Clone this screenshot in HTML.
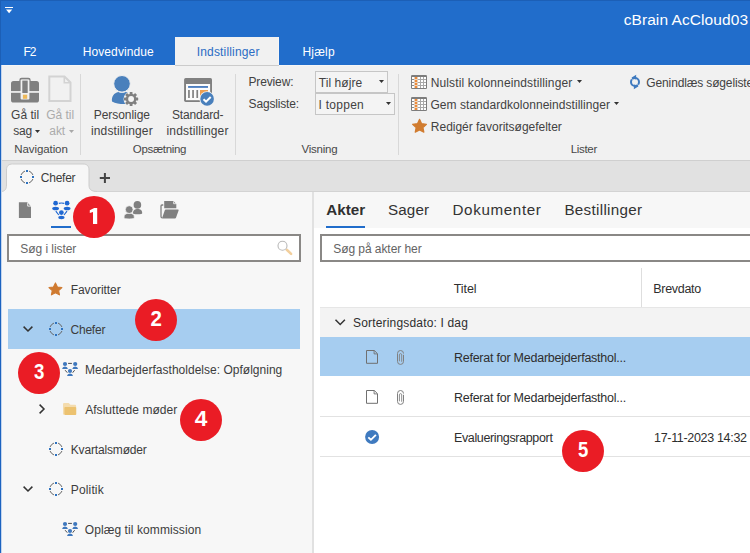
<!DOCTYPE html>
<html>
<head>
<meta charset="utf-8">
<style>
*{box-sizing:border-box;margin:0;padding:0}
html,body{width:750px;height:553px;overflow:hidden}
body{position:relative;background:#f1f1f1;font-family:"Liberation Sans",sans-serif;font-size:12px;color:#262626}
.a{position:absolute;white-space:nowrap}
.t{position:absolute;white-space:nowrap;line-height:16px;height:16px}
.sep{width:1px;background:#d8d8d8;top:74px;height:81px}
.num{position:absolute;width:42px;height:42px;border-radius:50%;background:#ea1c25;color:#fff;font-weight:bold;font-size:22px;line-height:40.500px;text-align:center}
</style>
</head>
<body>
<!-- title bar -->
<div class="a" style="left:0;top:0;width:750px;height:65px;background:#216dcb"></div>
<div class="a" style="left:0;top:0;width:750px;height:1px;background:#1c5fb6"></div>
<div class="a" style="left:0;top:65px;width:750px;height:1px;background:#f6f6f6"></div>
<svg class="a" style="left:0;top:0" width="20" height="16" viewBox="0 0 20 16"><rect x="5" y="7" width="8" height="1" fill="#fff"/><path d="M6 9.500h6.200L9.100 13.200z" fill="#fff"/></svg>
<div class="a" style="left:0;top:0;width:1px;height:65px;background:#1c5fb6"></div>
<div class="a" style="left:175px;top:37px;width:104px;height:28px;background:#f1f1f1"></div>
<div class="a" style="left:278px;top:37px;width:1px;height:28px;background:#f6f6f6"></div>

<!-- ribbon -->
<div class="a" style="left:0;top:66px;width:750px;height:94px;background:#f1f1f1"></div>
<div class="a" style="left:175px;top:65px;width:104px;height:1px;background:#cbcbcb"></div>
<div class="a" style="left:0;top:160px;width:750px;height:1px;background:#cfcfcf"></div>
<div class="a sep" style="left:80px"></div>
<div class="a sep" style="left:235px"></div>
<div class="a sep" style="left:398px"></div>
<div class="a" style="left:315px;top:71px;width:73px;height:22px;border:1px solid #c6c6c6;background:#f4f4f4"></div>
<div class="a" style="left:315px;top:93px;width:80px;height:22px;border:1px solid #c6c6c6;background:#f4f4f4"></div>
<!-- ribbon icons -->
<svg class="a" style="left:10px;top:76px" width="30" height="28" viewBox="0 0 30 28">
<path d="M10.3 6V4a1.3 1.3 0 0 1 1.3-1.3h6.8a1.3 1.3 0 0 1 1.3 1.3v2" fill="none" stroke="#808080" stroke-width="1.9"/>
<rect x="1" y="5" width="28" height="21.5" rx="2.6" fill="#808080"/>
<rect x="1" y="15.1" width="28" height="1.7" fill="#f1f1f1"/>
<rect x="10.6" y="3.6" width="8.8" height="19.8" rx="1" fill="#f1f1f1"/>
<rect x="12.3" y="4.6" width="5.4" height="12.4" fill="#808080"/>
<rect x="12.9" y="18.7" width="4.3" height="4.1" fill="#eeb95a"/>
</svg>
<svg class="a" style="left:47px;top:74px" width="26" height="30" viewBox="0 0 26 30">
<path d="M2.3 2.5H17.5L23.5 8.5V27H2.3Z" fill="#f1f1f1" stroke="#d3d3d3" stroke-width="2"/>
<path d="M17.3 2.8V8.8H23.3" fill="none" stroke="#d3d3d3" stroke-width="1.6"/>
</svg>
<svg class="a" style="left:108px;top:72px" width="36" height="36" viewBox="0 0 36 36">
<circle cx="14" cy="11.8" r="7.9" fill="#4a80bc"/>
<path d="M4 29.5c-0.6-5 2-8.700 6.300-9.600c2.400 1.200 5 1.200 7.400 0c1.500 0.300 2.600 0.800 3.600 1.600v10.100c-5 1-12.500 0.600-17.300-2.100z" fill="#4a80bc"/>
<circle cx="14" cy="11.800" r="8.300" fill="#4a80bc" stroke="#f1f1f1" stroke-width="1"/>
<circle cx="23.100" cy="27" r="7.600" fill="#f1f1f1"/>
<g fill="#808080"><circle cx="23.100" cy="27" r="5.300"/>
<g id="gt"><rect x="21.700" y="19.900" width="2.800" height="14.200" rx=".4"/></g>
<g transform="rotate(45 23.100 27)"><g><rect x="21.700" y="19.900" width="2.800" height="14.200" rx=".4"/></g></g><g transform="rotate(90 23.100 27)"><g><rect x="21.700" y="19.900" width="2.800" height="14.200" rx=".4"/></g></g><g transform="rotate(135 23.100 27)"><g><rect x="21.700" y="19.900" width="2.800" height="14.200" rx=".4"/></g></g></g>
<circle cx="23.100" cy="27" r="2.900" fill="#f4f4f4"/>
</svg>
<svg class="a" style="left:180px;top:72px" width="38" height="38" viewBox="0 0 38 38">
<rect x="4.100" y="6" width="27.900" height="23.900" rx="1.600" fill="#808080"/>
<rect x="6" y="12" width="24.100" height="16.200" fill="#fbfbfb"/>
<rect x="8.100" y="14.100" width="19.900" height="1.700" fill="#3a70b8"/>
<rect x="8.100" y="18" width="1.700" height="8" fill="#808080"/>
<rect x="12.200" y="18" width="1.700" height="8" fill="#808080"/>
<rect x="16.400" y="18" width="1.700" height="8" fill="#808080"/>
<rect x="20" y="18" width="8" height="6" fill="#f0a050"/>
<circle cx="27.100" cy="26.900" r="7.700" fill="#f1f1f1"/>
<circle cx="27.100" cy="26.900" r="6.800" fill="#4a80bc"/>
<path d="M23.500 27.300l2.500 2.300l4.700-4.600" fill="none" stroke="#fff" stroke-width="2"/>
</svg>
<svg class="a" style="left:411px;top:75px" width="16" height="14" viewBox="0 0 16 14"><g><rect x="0" y="0" width="16" height="14" rx="1.300" fill="#7d7d7d"/><rect x="1" y="2" width="14" height="11" fill="#a8a8a8"/><rect x="1" y="2" width="2" height="11" fill="#8c8c8c"/><rect x="3.200" y="2" width="3.600" height="11" fill="#f1d7bf"/><g fill="#fff"><rect x="1" y="2" width="2" height="2"/><rect x="7" y="2" width="2" height="2"/><rect x="10" y="2" width="2" height="2"/><rect x="13" y="2" width="2" height="2"/><rect x="1" y="5" width="2" height="2"/><rect x="7" y="5" width="2" height="2"/><rect x="10" y="5" width="2" height="2"/><rect x="13" y="5" width="2" height="2"/><rect x="1" y="8" width="2" height="2"/><rect x="7" y="8" width="2" height="2"/><rect x="10" y="8" width="2" height="2"/><rect x="13" y="8" width="2" height="2"/><rect x="1" y="11" width="2" height="2"/><rect x="7" y="11" width="2" height="2"/><rect x="10" y="11" width="2" height="2"/><rect x="13" y="11" width="2" height="2"/></g><g fill="#ef8a38"><rect x="4" y="2" width="2" height="2"/><rect x="4" y="5" width="2" height="2"/><rect x="4" y="8" width="2" height="2"/><rect x="4" y="11" width="2" height="2"/></g></g></svg>
<svg class="a" style="left:411px;top:97px" width="16" height="14" viewBox="0 0 16 14">
<g id="tbl"><rect x="0" y="0" width="16" height="14" rx="1.300" fill="#7d7d7d"/><rect x="1" y="2" width="14" height="11" fill="#a8a8a8"/><rect x="1" y="2" width="2" height="11" fill="#8c8c8c"/><rect x="3.200" y="2" width="3.600" height="11" fill="#f1d7bf"/><g fill="#fff"><rect x="1" y="2" width="2" height="2"/><rect x="7" y="2" width="2" height="2"/><rect x="10" y="2" width="2" height="2"/><rect x="13" y="2" width="2" height="2"/><rect x="1" y="5" width="2" height="2"/><rect x="7" y="5" width="2" height="2"/><rect x="10" y="5" width="2" height="2"/><rect x="13" y="5" width="2" height="2"/><rect x="1" y="8" width="2" height="2"/><rect x="7" y="8" width="2" height="2"/><rect x="10" y="8" width="2" height="2"/><rect x="13" y="8" width="2" height="2"/><rect x="1" y="11" width="2" height="2"/><rect x="7" y="11" width="2" height="2"/><rect x="10" y="11" width="2" height="2"/><rect x="13" y="11" width="2" height="2"/></g><g fill="#ef8a38"><rect x="4" y="2" width="2" height="2"/><rect x="4" y="5" width="2" height="2"/><rect x="4" y="8" width="2" height="2"/><rect x="4" y="11" width="2" height="2"/></g></g>
</svg>
<svg class="a" style="left:411px;top:118px" width="17" height="15" viewBox="0 0 17 15"><path id="star" transform="translate(.9 .9) scale(.9 .88)" d="M8.500 .5l2.350 4.900l5.350 .700l-3.900 3.700l1 5.300l-4.800-2.600l-4.800 2.600l1-5.300l-3.900-3.700l5.350-.700z" fill="#d17c30" stroke="#d17c30" stroke-width="1.300" stroke-linejoin="round"/></svg>
<svg class="a" style="left:628px;top:73px" width="14" height="18" viewBox="-7 -9 14 18">
<circle cx="0" cy="0" r="4" fill="none" stroke="#3f7abf" stroke-width="2"/>
<path d="M-3.700 -4.300L1.200 -7.200L1 -2.600ZM3.700 4.300L-1.200 7.200L-1 2.600Z" fill="#3f7abf"/>
<path d="M-4.600 -5.200L-2.600 -2.200M4.600 5.200L2.600 2.200" stroke="#f1f1f1" stroke-width=".7"/>
</svg>
<!-- dropdown arrows -->
<svg class="a" style="left:35px;top:130px" width="5" height="3" viewBox="0 0 5 3"><path d="M0 0h5L2.500 3z" fill="#333"/></svg>
<svg class="a" style="left:69px;top:130px" width="5" height="3" viewBox="0 0 5 3"><path d="M0 0h5L2.500 3z" fill="#a8a8a8"/></svg>
<svg class="a" style="left:379px;top:80px" width="5" height="3" viewBox="0 0 5 3"><path d="M0 0h5L2.500 3z" fill="#333"/></svg>
<svg class="a" style="left:386px;top:102px" width="5" height="3" viewBox="0 0 5 3"><path d="M0 0h5L2.500 3z" fill="#333"/></svg>
<svg class="a" style="left:577px;top:80px" width="5" height="3" viewBox="0 0 5 3"><path d="M0 0h5L2.500 3z" fill="#333"/></svg>
<svg class="a" style="left:614px;top:102px" width="5" height="3" viewBox="0 0 5 3"><path d="M0 0h5L2.500 3z" fill="#333"/></svg>


<!-- tab strip -->
<div class="a" style="left:0;top:161px;width:750px;height:30px;background:#e1e1e1"></div>
<div class="a" style="left:0;top:191px;width:750px;height:1px;background:#d3d3d3"></div>

<!-- content -->
<div class="a" style="left:0;top:192px;width:750px;height:361px;background:#f7f7f7"></div>
<div class="a" style="left:312px;top:192px;width:2px;height:361px;background:#e1e1e1"></div>
<div class="a" style="left:314px;top:228px;width:436px;height:325px;background:#fff"></div>
<svg class="a" style="left:0;top:160px" width="112" height="33" viewBox="0 0 112 33">
<path d="M1 31.500C5 31.500 6.500 29 6.500 25V10C6.500 6 8.500 4 12.500 4H83C87 4 89 6 89 10V25C89 29 90.500 31.500 97.500 31.500V33H1Z" fill="#f7f7f7"/>
<path d="M1 31.500C5 31.500 6.500 29 6.500 25V10C6.500 6 8.500 4 12.500 4H83C87 4 89 6 89 10V25C89 29 90.500 31.500 97.500 31.500" fill="none" stroke="#cdcdcd" stroke-width="1"/>
<path d="M99.800 18h10.200M104.900 12.900v10.200" stroke="#444" stroke-width="2"/>
</svg>
<div class="a" style="left:0;top:65px;width:1px;height:488px;background:#1c63c0"></div>
<div class="a" style="left:1px;top:65px;width:1px;height:488px;background:#c3d5ee"></div>

<!-- left panel -->
<div class="a" style="left:51px;top:226px;width:20px;height:2px;background:#216dcb"></div>
<div class="a" style="left:7px;top:234px;width:294px;height:28px;background:#fff;border:2px solid #8a8886"></div>
<div class="a" style="left:8px;top:309px;width:292px;height:40px;background:#a6cdf0"></div>

<!-- right panel -->
<div class="a" style="left:326px;top:226px;width:39px;height:2px;background:#216dcb"></div>
<div class="a" style="left:320px;top:234px;width:440px;height:28px;background:#fff;border:2px solid #8a8886"></div>
<div class="a" style="left:641px;top:268px;width:1px;height:39px;background:#dedede"></div>
<div class="a" style="left:320px;top:307px;width:430px;height:30px;background:#f3f3f3;border-top:1px solid #e6e6e6"></div>
<div class="a" style="left:320px;top:337px;width:430px;height:39px;background:#a6cdf0"></div>
<div class="a" style="left:320px;top:416px;width:430px;height:1px;background:#e2e2e2"></div>
<div class="a" style="left:320px;top:456px;width:430px;height:1px;background:#e2e2e2"></div>
<!--ICONS2S--><!-- panel icons -->
<svg class="a" style="left:0;top:160px" width="750" height="393" viewBox="0 160 750 393">
<defs>
<g id="circ"><path d="M2.400 -5.800A6.280 6.280 0 0 1 5.800 -2.400M5.800 2.400A6.280 6.280 0 0 1 2.400 5.800M-2.400 5.800A6.280 6.280 0 0 1 -5.800 2.400M-5.800 -2.400A6.280 6.280 0 0 1 -2.400 -5.800" fill="none" stroke="#666" stroke-width="1" stroke-linecap="round"/><g fill="#2e72bf"><rect x="-1" y="-7" width="2" height="2"/><rect x="-1" y="5" width="2" height="2"/><rect x="-7" y="-1" width="2" height="2"/><rect x="5" y="-1" width="2" height="2"/></g></g>
<g id="ppl"><g stroke="#4a4a4a" stroke-width="1" fill="none"><path d="M-1.900 -4.600h3.800M-4.900 2.200l2.200 2.500M4.600 2.200l-1.900 2.500"/></g>
<g fill="#3f78bd"><circle cx="-5" cy="-4" r="2.100"/><circle cx="5.200" cy="-4" r="2.100"/><circle cx="0" cy="3" r="2.100"/>
<path d="M-7.900 1.100q.3-2.500 2.900-2.500t2.900 2.500zM2.300 1.100q.3-2.500 2.900-2.500t2.900 2.500zM-3 7.900q.3-2.500 3-2.500t3 2.500z"/></g></g>
<g id="doc"><path d="M.5 .5H8.300L11.500 3.700V13.300H.5Z" fill="none" stroke="#707070" stroke-width="1"/><path d="M8.100 .7V3.900H11.300" fill="none" stroke="#707070" stroke-width=".9"/></g>
<g id="clip"><path d="M6.500 4.800V11.400a3 3 0 0 1-6 0V3.500a3 3 0 0 1 6 0" fill="none" stroke="#808080" stroke-width="1"/><path d="M2.400 11.300V4.800a1.150 1.150 0 0 1 2.300 0V11.800" fill="none" stroke="#808080" stroke-width=".9"/></g>
</defs>
<!-- tab circle -->
<g transform="translate(27 177)"><g><path d="M2.400 -5.800A6.280 6.280 0 0 1 5.800 -2.400M5.800 2.400A6.280 6.280 0 0 1 2.400 5.800M-2.400 5.800A6.280 6.280 0 0 1 -5.800 2.400M-5.800 -2.400A6.280 6.280 0 0 1 -2.400 -5.800" fill="none" stroke="#666" stroke-width="1" stroke-linecap="round"/><g fill="#2e72bf"><rect x="-1" y="-7" width="2" height="2"/><rect x="-1" y="5" width="2" height="2"/><rect x="-7" y="-1" width="2" height="2"/><rect x="5" y="-1" width="2" height="2"/></g></g></g>
<!-- toolbar: doc -->
<path d="M18.900 202.300H27.300L31 206.500V217.900H18.900Z" fill="#808080"/>
<path d="M27.700 202.700V206.100H30.900" fill="none" stroke="#f7f7f7" stroke-width=".9"/>
<!-- toolbar: network -->
<g fill="#1f68d2"><circle cx="55.600" cy="203.200" r="2.350"/><circle cx="67.100" cy="203.200" r="2.350"/><circle cx="61.400" cy="212.600" r="2.350"/>
<ellipse cx="55.600" cy="208.400" rx="3.400" ry="1.750"/><ellipse cx="67.100" cy="208.400" rx="3.400" ry="1.750"/><ellipse cx="61.400" cy="217.500" rx="3.100" ry="1.650"/></g>
<g fill="none" stroke="#1f68d2" stroke-width="1.200"><path d="M58.800 203.400Q61.400 202.600 64 203.400M55.800 211.200L58.800 215M67 211.200L64 215"/></g>
<!-- toolbar: people -->
<g fill="#808080"><circle cx="137.400" cy="204.900" r="3.800"/><path d="M133 213.200C133 210 134.800 208.900 137.600 208.900S142.200 210 142.200 213.200Q142.200 214.300 137.600 214.300T133 213.200Z"/></g>
<g fill="#808080" stroke="#f7f7f7" stroke-width=".8"><path d="M123.900 217.700C123.900 214.300 125.800 213.200 129.200 213.200S134.400 214.300 134.400 217.700Q134.400 219 129.200 219T123.900 217.700Z"/><circle cx="129.200" cy="209.600" r="3.900"/></g>
<!-- toolbar: folder -->
<path d="M164.200 201H173.400L176.300 203.900V208.300H164.200Z" fill="#808080"/>
<path d="M173.600 201.400V203.700H176" fill="none" stroke="#f7f7f7" stroke-width=".8"/>
<path d="M163.300 205H162Q161 205 161 206V216.500Q161 217.800 162.300 217.800" fill="none" stroke="#808080" stroke-width="1.300"/>
<path d="M165.800 209.600H178Q178.900 209.600 178.600 210.400L176 217.700Q175.700 218.500 175 218.500H162.600Q161.900 218.500 162.200 217.700L164.800 210.300Q165 209.600 165.800 209.600Z" fill="#808080"/>
<!-- magnifier -->
<path d="M286.800 249.800L291.100 253.900" stroke="#f2cf9d" stroke-width="2.600" stroke-linecap="round"/>
<circle cx="282.500" cy="245.800" r="4.500" fill="#fff" stroke="#b9b9b9" stroke-width="1.100"/>
<!-- tree -->
<path transform="translate(48.300 282.500) scale(.84 .82)" d="M8.500 .5l2.350 4.900l5.350 .700l-3.900 3.700l1 5.300l-4.800-2.600l-4.800 2.600l1-5.300l-3.900-3.700l5.350-.700z" fill="#cf7a30" stroke="#cf7a30" stroke-width="1.300" stroke-linejoin="round"/>
<g fill="none" stroke="#333" stroke-width="1.500"><path d="M23.600 326.600L28 331L32.400 326.600"/><path d="M23.600 486.600L28 491L32.400 486.600"/><path d="M39.600 404.600L44 409L39.600 413.400"/><path d="M335.500 319.700L340.200 324.500L344.900 319.700"/></g>
<g transform="translate(56 329)"><g><path d="M2.400 -5.800A6.280 6.280 0 0 1 5.800 -2.400M5.800 2.400A6.280 6.280 0 0 1 2.400 5.800M-2.400 5.800A6.280 6.280 0 0 1 -5.800 2.400M-5.800 -2.400A6.280 6.280 0 0 1 -2.400 -5.800" fill="none" stroke="#666" stroke-width="1" stroke-linecap="round"/><g fill="#2e72bf"><rect x="-1" y="-7" width="2" height="2"/><rect x="-1" y="5" width="2" height="2"/><rect x="-7" y="-1" width="2" height="2"/><rect x="5" y="-1" width="2" height="2"/></g></g></g><g transform="translate(56 449)"><g><path d="M2.400 -5.800A6.280 6.280 0 0 1 5.800 -2.400M5.800 2.400A6.280 6.280 0 0 1 2.400 5.800M-2.400 5.800A6.280 6.280 0 0 1 -5.800 2.400M-5.800 -2.400A6.280 6.280 0 0 1 -2.400 -5.800" fill="none" stroke="#666" stroke-width="1" stroke-linecap="round"/><g fill="#2e72bf"><rect x="-1" y="-7" width="2" height="2"/><rect x="-1" y="5" width="2" height="2"/><rect x="-7" y="-1" width="2" height="2"/><rect x="5" y="-1" width="2" height="2"/></g></g></g><g transform="translate(56 489)"><g><path d="M2.400 -5.800A6.280 6.280 0 0 1 5.800 -2.400M5.800 2.400A6.280 6.280 0 0 1 2.400 5.800M-2.400 5.800A6.280 6.280 0 0 1 -5.800 2.400M-5.800 -2.400A6.280 6.280 0 0 1 -2.400 -5.800" fill="none" stroke="#666" stroke-width="1" stroke-linecap="round"/><g fill="#2e72bf"><rect x="-1" y="-7" width="2" height="2"/><rect x="-1" y="5" width="2" height="2"/><rect x="-7" y="-1" width="2" height="2"/><rect x="5" y="-1" width="2" height="2"/></g></g></g>
<g transform="translate(70 368)"><g><g stroke="#4a4a4a" stroke-width="1" fill="none"><path d="M-1.900 -4.600h3.800M-4.900 2.200l2.200 2.500M4.600 2.200l-1.900 2.500"/></g>
<g fill="#3f78bd"><circle cx="-5" cy="-4" r="2.100"/><circle cx="5.200" cy="-4" r="2.100"/><circle cx="0" cy="3" r="2.100"/>
<path d="M-7.900 1.100q.3-2.500 2.900-2.500t2.900 2.500zM2.300 1.100q.3-2.500 2.900-2.500t2.900 2.500zM-3 7.900q.3-2.500 3-2.500t3 2.500z"/></g></g></g><g transform="translate(70 528)"><g><g stroke="#4a4a4a" stroke-width="1" fill="none"><path d="M-1.900 -4.600h3.800M-4.900 2.200l2.200 2.500M4.600 2.200l-1.900 2.500"/></g>
<g fill="#3f78bd"><circle cx="-5" cy="-4" r="2.100"/><circle cx="5.200" cy="-4" r="2.100"/><circle cx="0" cy="3" r="2.100"/>
<path d="M-7.900 1.100q.3-2.500 2.900-2.500t2.900 2.500zM2.300 1.100q.3-2.500 2.900-2.500t2.900 2.500zM-3 7.900q.3-2.500 3-2.500t3 2.500z"/></g></g></g>
<path d="M63 414.500V404Q63 402.900 64.100 402.900H68.700L70.500 404.800H75Q76.100 404.800 76.100 405.900V414.500Z" fill="#f4dcae"/>
<rect x="64.400" y="407" width="11.800" height="8" rx=".8" fill="#ecc270"/>
<!-- list -->
<g transform="translate(366 350)"><g><path d="M.5 .5H8.300L11.500 3.700V13.300H.5Z" fill="none" stroke="#707070" stroke-width="1"/><path d="M8.100 .7V3.900H11.300" fill="none" stroke="#707070" stroke-width=".9"/></g></g><g transform="translate(366 390)"><g><path d="M.5 .5H8.300L11.500 3.700V13.300H.5Z" fill="none" stroke="#707070" stroke-width="1"/><path d="M8.100 .7V3.900H11.300" fill="none" stroke="#707070" stroke-width=".9"/></g></g>
<g transform="translate(397 350)"><g><path d="M6.500 4.800V11.400a3 3 0 0 1-6 0V3.500a3 3 0 0 1 6 0" fill="none" stroke="#808080" stroke-width="1"/><path d="M2.400 11.300V4.800a1.150 1.150 0 0 1 2.300 0V11.800" fill="none" stroke="#808080" stroke-width=".9"/></g></g><g transform="translate(397 390)"><g><path d="M6.500 4.800V11.400a3 3 0 0 1-6 0V3.500a3 3 0 0 1 6 0" fill="none" stroke="#808080" stroke-width="1"/><path d="M2.400 11.300V4.800a1.150 1.150 0 0 1 2.300 0V11.800" fill="none" stroke="#808080" stroke-width=".9"/></g></g>
<circle cx="372.100" cy="437" r="7" fill="#3f7abf"/>
<path d="M368.300 437.400l2.600 2.400l5-5" fill="none" stroke="#fff" stroke-width="1.900"/>
</svg>
<!--ICONS2E-->
<div class="t" style="left:623.73px;top:11.6px;font-size:15.5px;letter-spacing:0.071px;color:#fff">cBrain AcCloud03</div>
<div class="t" style="left:23.39px;top:43.8px;font-size:12px;letter-spacing:-0.981px;color:#fff">F2</div>
<div class="t" style="left:82.76px;top:43.8px;font-size:12px;letter-spacing:0.088px;color:#fff">Hovedvindue</div>
<div class="t" style="left:196.69px;top:43.8px;font-size:12px;letter-spacing:0.170px;color:#2b6cc4">Indstillinger</div>
<div class="t" style="left:302.38px;top:43.8px;font-size:12px;letter-spacing:0.211px;color:#fff">Hjælp</div>
<div class="t" style="left:11.10px;top:106.8px;font-size:12px;letter-spacing:0.013px;color:#424242">Gå til</div>
<div class="t" style="left:13.35px;top:122.8px;font-size:12px;letter-spacing:-0.224px;color:#424242">sag</div>
<div class="t" style="left:46.14px;top:106.8px;font-size:12px;letter-spacing:0.009px;color:#ababab">Gå til</div>
<div class="t" style="left:49.33px;top:122.8px;font-size:12px;letter-spacing:-0.105px;color:#ababab">akt</div>
<div class="t" style="left:14.33px;top:140.5px;font-size:11.5px;letter-spacing:-0.096px;color:#484848">Navigation</div>
<div class="t" style="left:93.70px;top:106.8px;font-size:12px;letter-spacing:-0.051px;color:#424242">Personlige</div>
<div class="t" style="left:90.95px;top:122.8px;font-size:12px;letter-spacing:0.142px;color:#424242">indstillinger</div>
<div class="t" style="left:171.90px;top:106.8px;font-size:12px;letter-spacing:-0.123px;color:#424242">Standard-</div>
<div class="t" style="left:166.55px;top:122.8px;font-size:12px;letter-spacing:0.153px;color:#424242">indstillinger</div>
<div class="t" style="left:132.79px;top:140.5px;font-size:11.5px;letter-spacing:-0.315px;color:#484848">Opsætning</div>
<div class="t" style="left:248.41px;top:73.8px;font-size:12px;letter-spacing:-0.125px;color:#424242">Preview:</div>
<div class="t" style="left:248.62px;top:95.8px;font-size:12px;letter-spacing:-0.180px;color:#424242">Sagsliste:</div>
<div class="t" style="left:318.79px;top:74.8px;font-size:12px;letter-spacing:0.070px;color:#424242">Til højre</div>
<div class="t" style="left:318.59px;top:96.8px;font-size:12px;letter-spacing:0.262px;color:#424242">I toppen</div>
<div class="t" style="left:301.55px;top:140.5px;font-size:11.5px;letter-spacing:-0.245px;color:#484848">Visning</div>
<div class="t" style="left:430.72px;top:74.8px;font-size:12px;letter-spacing:0.128px;color:#424242">Nulstil kolonneindstillinger</div>
<div class="t" style="left:430.46px;top:96.8px;font-size:12px;letter-spacing:0.044px;color:#424242">Gem standardkolonneindstillinger</div>
<div class="t" style="left:430.84px;top:118.8px;font-size:12px;letter-spacing:-0.017px;color:#424242">Redigér favoritsøgefelter</div>
<div class="t" style="left:646.36px;top:74.8px;font-size:12px;letter-spacing:-0.143px;color:#424242">Genindlæs søgelister</div>
<div class="t" style="left:570.79px;top:140.5px;font-size:11.5px;letter-spacing:-0.335px;color:#484848">Lister</div>
<div class="t" style="left:40.77px;top:169.8px;font-size:12px;letter-spacing:-0.239px;color:#3c3c3c">Chefer</div>
<div class="t" style="left:20.34px;top:240.8px;font-size:12px;letter-spacing:-0.059px;color:#666">Søg i lister</div>
<div class="t" style="left:70.67px;top:281.8px;font-size:12px;letter-spacing:-0.071px;color:#3c3c3c">Favoritter</div>
<div class="t" style="left:70.44px;top:321.8px;font-size:12px;letter-spacing:-0.195px;color:#3c3c3c">Chefer</div>
<div class="t" style="left:84.94px;top:361.8px;font-size:12px;letter-spacing:0.017px;color:#3c3c3c">Medarbejderfastholdelse: Opfølgning</div>
<div class="t" style="left:85.17px;top:401.8px;font-size:12px;letter-spacing:0.051px;color:#3c3c3c">Afsluttede møder</div>
<div class="t" style="left:70.79px;top:441.8px;font-size:12px;letter-spacing:-0.166px;color:#3c3c3c">Kvartalsmøder</div>
<div class="t" style="left:70.87px;top:481.8px;font-size:12px;letter-spacing:0.127px;color:#3c3c3c">Politik</div>
<div class="t" style="left:84.72px;top:521.8px;font-size:12px;letter-spacing:0.090px;color:#3c3c3c">Oplæg til kommission</div>
<div class="t" style="left:326.20px;top:201.7px;font-size:15.2px;letter-spacing:0.036px;color:#303030;font-weight:bold">Akter</div>
<div class="t" style="left:387.89px;top:201.7px;font-size:15.2px;letter-spacing:0.169px;color:#333">Sager</div>
<div class="t" style="left:452.48px;top:201.7px;font-size:15.2px;letter-spacing:0.635px;color:#333">Dokumenter</div>
<div class="t" style="left:564.40px;top:201.7px;font-size:15.2px;letter-spacing:0.316px;color:#333">Bestillinger</div>
<div class="t" style="left:333.30px;top:240.8px;font-size:12px;letter-spacing:-0.070px;color:#636363">Søg på akter her</div>
<div class="t" style="left:453.81px;top:280.7px;font-size:12.5px;letter-spacing:-0.094px;color:#2e2e2e">Titel</div>
<div class="t" style="left:653.23px;top:280.7px;font-size:12.5px;letter-spacing:-0.293px;color:#2e2e2e">Brevdato</div>
<div class="t" style="left:353.08px;top:314.8px;font-size:12px;letter-spacing:0.170px;color:#2e2e2e">Sorteringsdato: I dag</div>
<div class="t" style="left:453.93px;top:349.7px;font-size:12.5px;letter-spacing:-0.238px;color:#2e2e2e">Referat for Medarbejderfasthol...</div>
<div class="t" style="left:453.93px;top:389.7px;font-size:12.5px;letter-spacing:-0.238px;color:#2e2e2e">Referat for Medarbejderfasthol...</div>
<div class="t" style="left:453.91px;top:429.7px;font-size:12.5px;letter-spacing:-0.351px;color:#2e2e2e">Evalueringsrapport</div>
<div class="t" style="left:654.06px;top:429.7px;font-size:12.5px;letter-spacing:-0.322px;color:#2e2e2e">17-11-2023 14:32</div>

<!-- numbers -->
<div class="num" style="left:73px;top:196px"><svg style="position:absolute;left:0;top:0" width="42" height="42" viewBox="0 0 42 42"><path d="M24.200 12V27.900H20V16L16.800 17.100V14.300L21.200 12Z" fill="#fff"/></svg></div>
<div class="num" style="left:135px;top:299px"><span style="display:inline-block;transform:scaleX(0.93)">2</span></div>
<div class="num" style="left:18px;top:352px"><span style="display:inline-block;transform:scaleX(0.85)">3</span></div>
<div class="num" style="left:180px;top:399px"><span style="display:inline-block;transform:scaleX(1.03)">4</span></div>
<div class="num" style="left:562px;top:430px"><span style="display:inline-block;transform:scaleX(0.84)">5</span></div>
</body>
</html>
